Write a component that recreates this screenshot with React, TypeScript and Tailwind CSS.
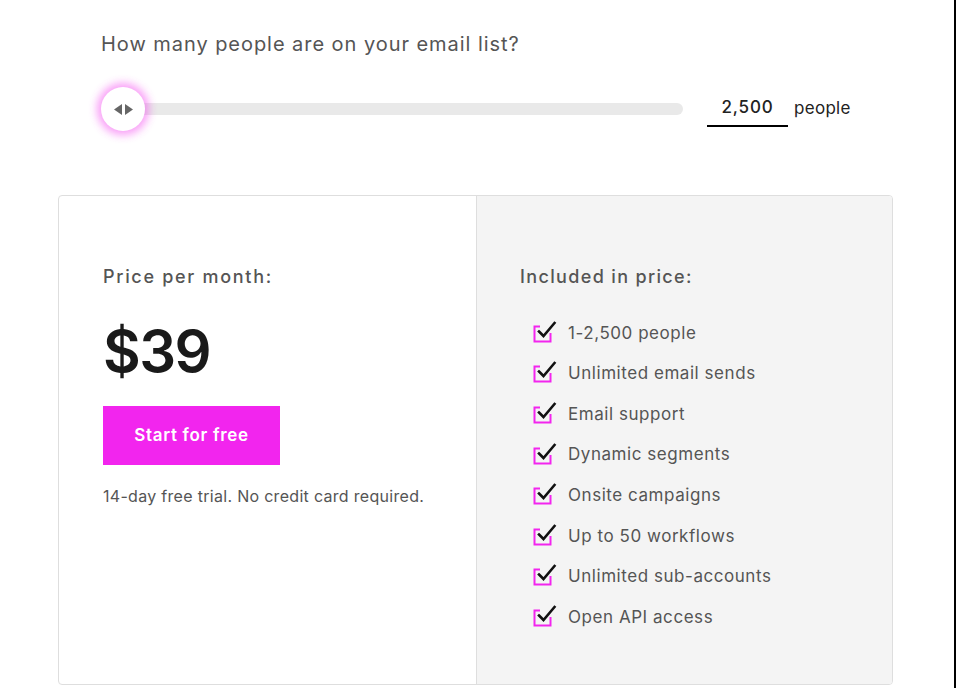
import React from 'react';

const features = [
  '1-2,500 people',
  'Unlimited email sends',
  'Email support',
  'Dynamic segments',
  'Onsite campaigns',
  'Up to 50 workflows',
  'Unlimited sub-accounts',
  'Open API access',
];

const CheckIcon = () => (
  <svg width="24" height="24" viewBox="0 0 24 24" fill="none" className="shrink-0 -mt-[3px]">
    <path d="M7 6.5H1.5V21.5H17.5V13" stroke="#f225ee" strokeWidth="2" />
    <path d="M6 11.5L10.5 16L21.5 3" stroke="#111" strokeWidth="2.6" strokeLinecap="square" />
  </svg>
);

const App: React.FC = () => {
  return (
    <div className="flex w-full h-[688px] overflow-hidden bg-white" style={{ fontFamily: 'Inter, "Open Sans", sans-serif' }}>
      <div className="flex-1 pl-[58px] pt-[30px]">
        <div className="pl-[43px]">
          <h2 className="text-[20px] leading-7 text-[#555] font-normal tracking-[0.95px]">
            How many people are on your email list?
          </h2>

          <div className="flex items-center mt-[29px]">
            <div className="relative flex items-center w-[582px] h-11">
              <div className="ml-[22px] flex-1 h-3 rounded-full bg-[#e9e9e9]" />
              <div className="absolute left-0 top-0 w-11 h-11 rounded-full bg-white shadow-[0_0_8px_4px_rgba(242,37,238,0.45)] flex items-center justify-center gap-[3px]">
                <svg width="8" height="11" viewBox="0 0 8 11"><path d="M8 0V11L0 5.5Z" fill="#666" /></svg>
                <svg width="8" height="11" viewBox="0 0 8 11"><path d="M0 0V11L8 5.5Z" fill="#666" /></svg>
              </div>
            </div>
            <div className="ml-6 w-[81px] h-[36px] border-b-2 border-black flex items-center justify-center text-[17px] font-medium text-[#222] tracking-[0.8px]">
              2,500
            </div>
            <span className="ml-[6px] text-[17px] text-[#222] pb-[1px] tracking-[0.3px]">people</span>
          </div>
        </div>

        <div className="mt-[64px] w-[835px] h-[490px] border border-[#dedede] rounded-[4px] flex overflow-hidden">
          <div className="w-[417px] pl-[44px] pt-[69px]">
            <p className="text-[18px] leading-6 font-medium text-[#555] tracking-[1.7px]">Price per month:</p>
            <p className="mt-[32px] text-[58px] leading-[60px] font-semibold text-[#1a1a1a] tracking-[-1.5px]">$39</p>
            <button className="mt-[25px] w-[177px] h-[59px] bg-[#f225ee] text-white text-[17px] font-semibold tracking-[0.7px]">
              Start for free
            </button>
            <p className="mt-[19px] text-[16px] leading-6 text-[#555] tracking-[0.3px]">14-day free trial. No credit card required.</p>
          </div>
          <div className="flex-1 bg-[#f4f4f4] border-l border-[#dedede] pl-[43px] pt-[69px]">
            <p className="text-[18px] leading-6 font-medium text-[#555] tracking-[1.35px]">Included in price:</p>
            <ul className="mt-[24px]">
              {features.map((f) => (
                <li key={f} className="h-[40.6px] flex items-center pl-[13px] gap-[11px]">
                  <CheckIcon />
                  <span className="text-[17px] text-[#555] tracking-[0.55px]">{f}</span>
                </li>
              ))}
            </ul>
          </div>
        </div>
      </div>
      <div className="w-[2px] bg-black" />
    </div>
  );
};

export default App;
